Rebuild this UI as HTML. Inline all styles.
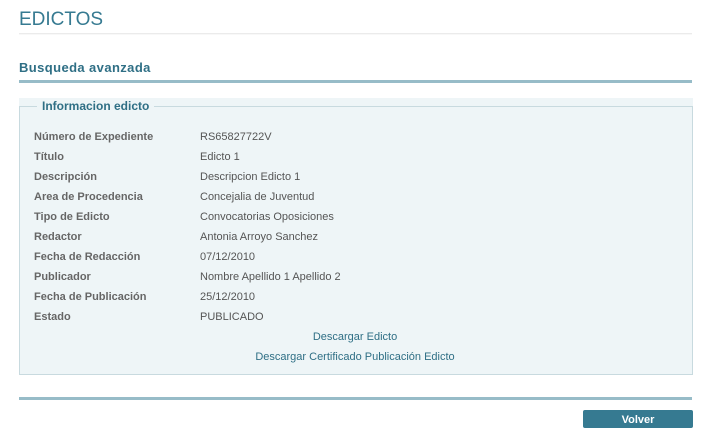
<!DOCTYPE html>
<html><head><meta charset="utf-8"><style>
*{margin:0;padding:0;box-sizing:border-box}
body{width:712px;height:444px;background:#fff;font-family:"Liberation Sans",sans-serif;position:relative;overflow:hidden}
.t{position:absolute;left:19px;top:9px;font-size:19px;color:#367a91}
.hl{position:absolute;left:19px;top:33px;width:673px;height:12px;background:linear-gradient(#e4e4e4,#fff 2px,#fff)}
.h2{position:absolute;left:19px;top:60px;font-size:13px;font-weight:bold;color:#2f6f85;letter-spacing:.4px}
.bar{position:absolute;left:19px;top:80px;width:673px;height:3px;background:#97bcc8}
.box{position:absolute;left:19px;top:106px;width:674px;height:269px;background:#eef5f7;border:1px solid #c8dadf}
.topbg{position:absolute;left:19px;top:98px;width:674px;height:9px;background:#eef5f7}
.lg{position:absolute;left:37px;top:99px;padding:0 5px;background:#eef5f7;font-size:12px;font-weight:bold;color:#2f6f85}
.r{position:absolute;font-size:11px;color:#555;margin-top:2px}
.l{left:34px;font-weight:bold;color:#666}
.v{left:200px}
.a{position:absolute;text-align:center;font-size:11px;color:#2f6f85;margin-top:2px}
.bar2{position:absolute;left:19px;top:397px;width:673px;height:3px;background:#97bcc8}
.btn{position:absolute;left:583px;top:410px;width:110px;height:18px;background:#367a91;border-radius:2px;color:#fff;font-weight:bold;font-size:11px;text-align:center;line-height:20px}
</style></head><body>
<div class="t">EDICTOS</div>
<div class="hl"></div>
<div class="h2">Busqueda avanzada</div>
<div class="bar"></div>
<div class="topbg"></div>
<div class="box"></div>
<div class="lg">Informacion edicto</div>
<div class="r l" style="top:129px">Número de Expediente</div><div class="r v" style="top:129px">RS65827722V</div>
<div class="r l" style="top:149px">Título</div><div class="r v" style="top:149px">Edicto 1</div>
<div class="r l" style="top:169px">Descripción</div><div class="r v" style="top:169px">Descripcion Edicto 1</div>
<div class="r l" style="top:189px">Area de Procedencia</div><div class="r v" style="top:189px">Concejalia de Juventud</div>
<div class="r l" style="top:209px">Tipo de Edicto</div><div class="r v" style="top:209px">Convocatorias Oposiciones</div>
<div class="r l" style="top:229px">Redactor</div><div class="r v" style="top:229px">Antonia Arroyo Sanchez</div>
<div class="r l" style="top:249px">Fecha de Redacción</div><div class="r v" style="top:249px">07/12/2010</div>
<div class="r l" style="top:269px">Publicador</div><div class="r v" style="top:269px">Nombre Apellido 1 Apellido 2</div>
<div class="r l" style="top:289px">Fecha de Publicación</div><div class="r v" style="top:289px">25/12/2010</div>
<div class="r l" style="top:309px">Estado</div><div class="r v" style="top:309px">PUBLICADO</div>
<div class="a" style="top:329px;left:0;width:710px">Descargar Edicto</div>
<div class="a" style="top:349px;left:0;width:710px">Descargar Certificado Publicación Edicto</div>
<div class="bar2"></div>
<div class="btn">Volver</div>
</body></html>
